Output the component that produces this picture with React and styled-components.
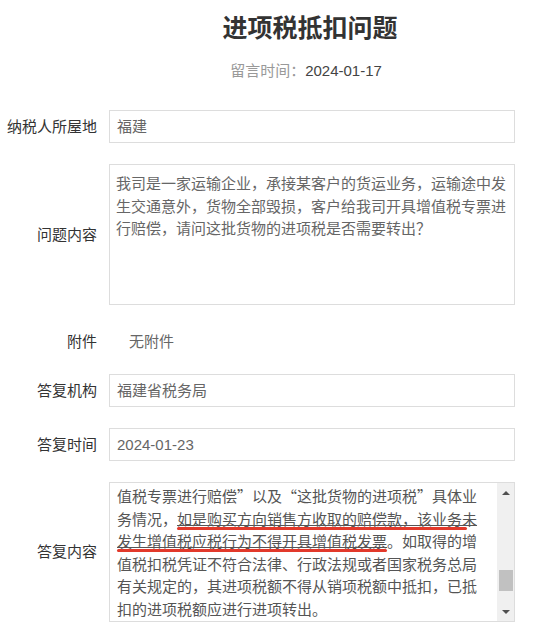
import React from "react";
import styled, { createGlobalStyle } from "styled-components";

const GlobalStyle = createGlobalStyle`
  body {
    margin: 0;
    background: #fff;
    font-family: "Liberation Sans", "Noto Sans CJK SC", sans-serif;
    color: #333;
  }
`;

const Page = styled.div`
  padding-top: 10px;
`;

const Header = styled.div`
  margin: 0 14px 0 100px;
  text-align: center;
`;

const Title = styled.h1`
  margin: 0;
  font-size: 25px;
  line-height: 36px;
  font-weight: bold;
  color: #333;
`;

const Meta = styled.p`
  margin: 14px 0 0;
  font-size: 15px;
  line-height: 22px;
  color: #444;
  padding-right: 8px;
`;

const MetaLabel = styled.span`
  color: #999;
`;

const Form = styled.div`
  display: flex;
  flex-direction: column;
  gap: 21px;
  margin-top: 28px;
  padding-right: 19px;
`;

const Row = styled.div`
  display: grid;
  grid-template-columns: 97px 1fr;
  column-gap: 12px;
  align-items: ${(p) => p.$align || "center"};
  min-height: ${(p) => p.$minHeight || "auto"};
`;

const Label = styled.div`
  text-align: right;
  font-size: 15px;
  line-height: 22px;
  color: #333;
  white-space: nowrap;
`;

const Field = styled.div`
  box-sizing: border-box;
  height: 33px;
  border: 1px solid #ddd;
  padding: 0 7px;
  font-size: 15px;
  line-height: 31px;
  color: #666;
`;

const TextBox = styled.div`
  box-sizing: border-box;
  height: 141px;
  border: 1px solid #ddd;
  padding: 7px 6px 6px 6px;
  font-family: "Noto Sans CJK SC", sans-serif;
  font-size: 15px;
  line-height: 22.5px;
  color: #666;
`;

const Plain = styled.div`
  padding-left: 20px;
  font-size: 15px;
  line-height: 22px;
  color: #666;
`;

const AnswerBox = styled.div`
  box-sizing: border-box;
  height: 140px;
  border: 1px solid #ddd;
  display: flex;
  overflow: hidden;
`;

const Viewport = styled.div`
  flex: 1;
  overflow: hidden;
  padding: 2px 7px 0;
  font-family: "Noto Sans CJK SC", sans-serif;
  font-size: 15px;
  line-height: 22.5px;
  color: #555;
`;

const Line = styled.div`
  white-space: nowrap;
`;

const Marked = styled.u`
  position: relative;
  text-decoration-color: #555;
  text-decoration-thickness: 1px;
  text-underline-offset: 0px;

  &::after {
    content: "";
    position: absolute;
    left: ${(p) => p.$from || 0}px;
    right: ${(p) => p.$cut || 0}px;
    bottom: -1px;
    height: 3px;
    border-radius: 2px;
    background: #e2392b;
  }
`;

const Scrollbar = styled.div`
  width: 17px;
  flex: none;
  background: #f0f0f0;
  display: flex;
  flex-direction: column;
  align-items: center;
`;

const Arrow = styled.div`
  width: 0;
  height: 0;
  margin-top: ${(p) => (p.$down ? "auto" : "8px")};
  margin-bottom: ${(p) => (p.$down ? "7px" : "0")};
  border-left: 4px solid transparent;
  border-right: 4px solid transparent;
  ${(p) =>
    p.$down
      ? "border-top: 4px solid #505050;"
      : "border-bottom: 4px solid #505050;"}
`;

const Thumb = styled.div`
  width: 14px;
  height: 21px;
  margin-top: 75px;
  background: #c1c1c1;
`;

export default function App() {
  return (
    <Page>
      <GlobalStyle />
      <Header>
        <Title>进项税抵扣问题</Title>
        <Meta>
          <MetaLabel>留言时间：</MetaLabel>2024-01-17
        </Meta>
      </Header>
      <Form>
        <Row>
          <Label>纳税人所屋地</Label>
          <Field>福建</Field>
        </Row>
        <Row>
          <Label>问题内容</Label>
          <TextBox>
            <Line>我司是一家运输企业，承接某客户的货运业务，运输途中发</Line>
            <Line>生交通意外，货物全部毁损，客户给我司开具增值税专票进</Line>
            <Line>行赔偿，请问这批货物的进项税是否需要转出？</Line>
          </TextBox>
        </Row>
        <Row $minHeight="27px" $align="end">
          <Label>附件</Label>
          <Plain>无附件</Plain>
        </Row>
        <Row>
          <Label>答复机构</Label>
          <Field>福建省税务局</Field>
        </Row>
        <Row>
          <Label>答复时间</Label>
          <Field>2024-01-23</Field>
        </Row>
        <Row>
          <Label>答复内容</Label>
          <AnswerBox>
            <Viewport>
              <Line>值税专票进行赔偿”以及“这批货物的进项税”具体业</Line>
              <Line>
                务情况，<Marked $cut={10}>如是购买方向销售方收取的赔偿款，该业务未</Marked>
              </Line>
              <Line>
                <Marked>发生增值税应税行为不得开具增值税发票</Marked>。如取得的增
              </Line>
              <Line>值税扣税凭证不符合法律、行政法规或者国家税务总局</Line>
              <Line>有关规定的，其进项税额不得从销项税额中抵扣，已抵</Line>
              <Line>扣的进项税额应进行进项转出。</Line>
            </Viewport>
            <Scrollbar>
              <Arrow />
              <Thumb />
              <Arrow $down />
            </Scrollbar>
          </AnswerBox>
        </Row>
      </Form>
    </Page>
  );
}
